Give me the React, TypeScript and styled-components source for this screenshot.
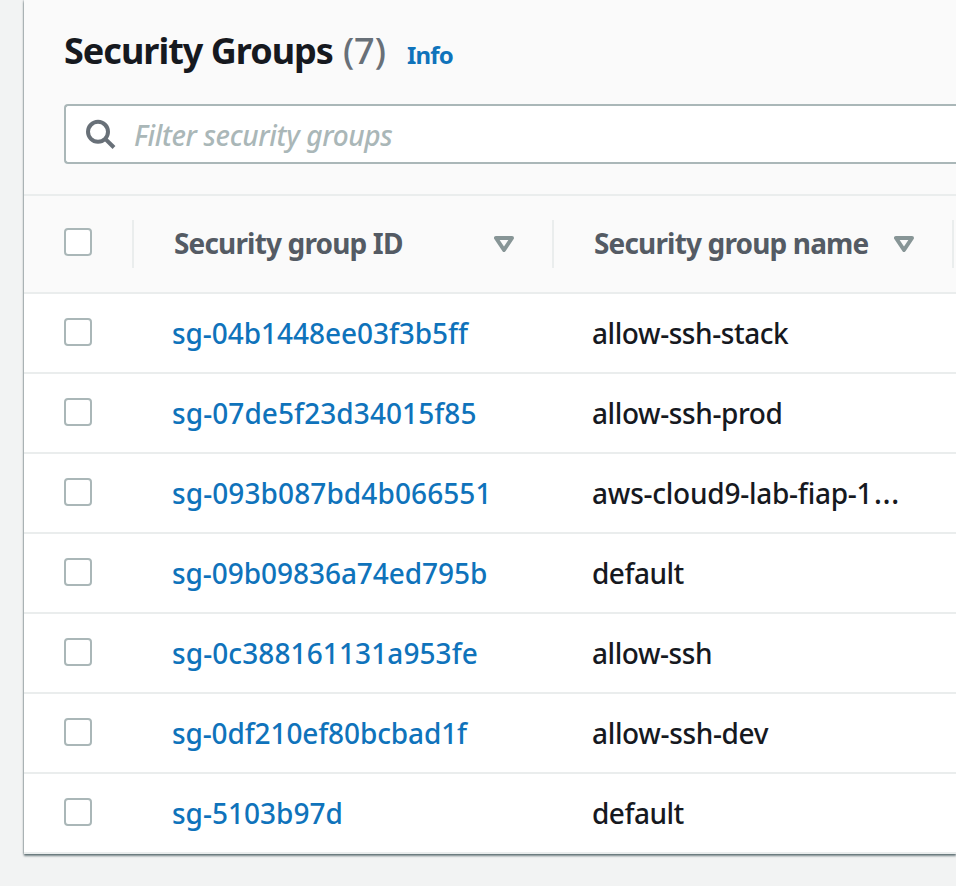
import React from "react";
import styled, { createGlobalStyle } from "styled-components";

const GlobalStyle = createGlobalStyle`
  *, *::before, *::after { box-sizing: border-box; }
  html, body { margin: 0; background: #f2f3f3; overflow: hidden; }
  body { font-family: "Noto Sans", "Open Sans", sans-serif; color: #16191f; }
`;

const Page = styled.main`
  height: 886px;
  padding-left: 24px;
  overflow: hidden;
`;

const Panel = styled.section`
  height: 854px;
  background: #fff;
  box-shadow: 0 2px 2px 0 rgba(0, 28, 36, 0.5), 0 0 2px 0 rgba(0, 28, 36, 0.5);
`;

const PanelHeader = styled.header`
  height: 196px;
  padding: 24px 0 0 40px;
  background: #fafafa;
  border-bottom: 2px solid #eaeded;
`;

const TitleRow = styled.div`
  display: flex;
  align-items: baseline;
  height: 80px;
  line-height: 54px;
  white-space: nowrap;
`;

const Title = styled.h1`
  margin: 0;
  font-size: 36px;
  font-weight: 700;
  letter-spacing: -1px;
`;

const Counter = styled.span`
  margin-left: 10px;
  font-size: 36px;
  font-weight: 500;
  color: #687078;
`;

const InfoLink = styled.a`
  margin-left: 21px;
  font-size: 24px;
  font-weight: 700;
  letter-spacing: -0.8px;
  color: #0f73bb;
`;

const SearchField = styled.label`
  display: flex;
  align-items: center;
  height: 60px;
  padding-left: 20px;
  background: #fff;
  border: 2px solid #aab7b8;
  border-right: 0;
  border-radius: 4px 0 0 4px;
`;

const SearchInput = styled.input`
  flex: 1;
  height: 54px;
  margin-left: 18px;
  padding: 2px 0 0;
  border: 0;
  outline: 0;
  background: transparent;
  font: italic 500 28px "Noto Sans", sans-serif;
  letter-spacing: -0.35px;
  &::placeholder { color: #aab7b8; opacity: 1; }
`;

const Row = styled.div<{ $head?: boolean }>`
  display: grid;
  grid-template-columns: 110px 420px 400px 1fr;
  align-items: center;
  height: ${(p) => (p.$head ? 98 : 80)}px;
  background: ${(p) => (p.$head ? "#fafafa" : "#fff")};
  border-bottom: 2px solid #eaeded;
`;

const SelectCell = styled.div<{ $head?: boolean }>`
  display: flex;
  align-items: center;
  height: 48px;
  padding: 0 0 ${(p) => (p.$head ? 4 : 2)}px 40px;
  border-right: ${(p) => (p.$head ? "2px solid #eaeded" : "0")};
`;

const Checkbox = styled.input.attrs({ type: "checkbox" })`
  appearance: none;
  width: 28px;
  height: 28px;
  margin: 0;
  background: #fff;
  border: 2px solid #aab7b8;
  border-radius: 4px;
`;

const HeadCell = styled.div`
  display: flex;
  align-items: center;
  justify-content: space-between;
  height: 48px;
  padding: 0 38px 0 40px;
  border-right: 2px solid #eaeded;
`;

const HeadLabel = styled.span`
  margin-bottom: 2px;
  font-size: 28px;
  line-height: 38px;
  font-weight: 700;
  color: #545b64;
  letter-spacing: -0.84px;
  white-space: nowrap;
`;

const Cell = styled.div`
  height: 38px;
  padding-left: 38px;
  font-size: 28px;
  line-height: 38px;
  font-weight: 500;
  white-space: nowrap;
`;

const Value = styled.span<{ $spacing: number }>`
  letter-spacing: ${(p) => p.$spacing}px;
`;

const IdLink = styled(Value)`
  color: #0f73bb;
`;

const Ellipsis = styled.span`
  margin-left: 1px;
  font-size: 33px;
  font-weight: 400;
  line-height: 1;
`;

const SearchIcon = () => (
  <svg width="30" height="30" viewBox="0 0 30 30" fill="none" stroke="#687078" strokeWidth="4">
    <circle cx="12" cy="12.8" r="10" />
    <path d="M19 19.6L28 28.5" />
  </svg>
);

const SortIcon = () => (
  <svg width="20" height="16" viewBox="0 0 20 16" fill="none" stroke="#879596" strokeWidth="4" strokeLinejoin="round">
    <path d="M2 2H18L10 14Z" />
  </svg>
);

const groups = [
  { id: "sg-04b1448ee03f3b5ff", idSpacing: -0.05, name: "allow-ssh-stack", nameSpacing: -0.43 },
  { id: "sg-07de5f23d34015f85", idSpacing: 0.08, name: "allow-ssh-prod", nameSpacing: -0.4 },
  { id: "sg-093b087bd4b066551", idSpacing: 0.1, name: "aws-cloud9-lab-fiap-1", nameSpacing: -0.24, truncated: true },
  { id: "sg-09b09836a74ed795b", idSpacing: -0.05, name: "default", nameSpacing: -0.5 },
  { id: "sg-0c388161131a953fe", idSpacing: 0.1, name: "allow-ssh", nameSpacing: -0.45 },
  { id: "sg-0df210ef80bcbad1f", idSpacing: -0.12, name: "allow-ssh-dev", nameSpacing: -0.35 },
  { id: "sg-5103b97d", idSpacing: 0, name: "default", nameSpacing: -0.5 },
];

export default function App() {
  return (
    <Page>
      <GlobalStyle />
      <Panel>
        <PanelHeader>
          <TitleRow>
            <Title>Security Groups</Title>
            <Counter>(7)</Counter>
            <InfoLink>Info</InfoLink>
          </TitleRow>
          <SearchField>
            <SearchIcon />
            <SearchInput placeholder="Filter security groups" />
          </SearchField>
        </PanelHeader>
        <Row $head>
          <SelectCell $head><Checkbox /></SelectCell>
          <HeadCell><HeadLabel>Security group ID</HeadLabel><SortIcon /></HeadCell>
          <HeadCell><HeadLabel>Security group name</HeadLabel><SortIcon /></HeadCell>
        </Row>
        {groups.map((g) => (
          <Row key={g.id}>
            <SelectCell><Checkbox /></SelectCell>
            <Cell><IdLink $spacing={g.idSpacing}>{g.id}</IdLink></Cell>
            <Cell>
              <Value $spacing={g.nameSpacing}>{g.name}</Value>
              {g.truncated && <Ellipsis>…</Ellipsis>}
            </Cell>
          </Row>
        ))}
      </Panel>
    </Page>
  );
}
